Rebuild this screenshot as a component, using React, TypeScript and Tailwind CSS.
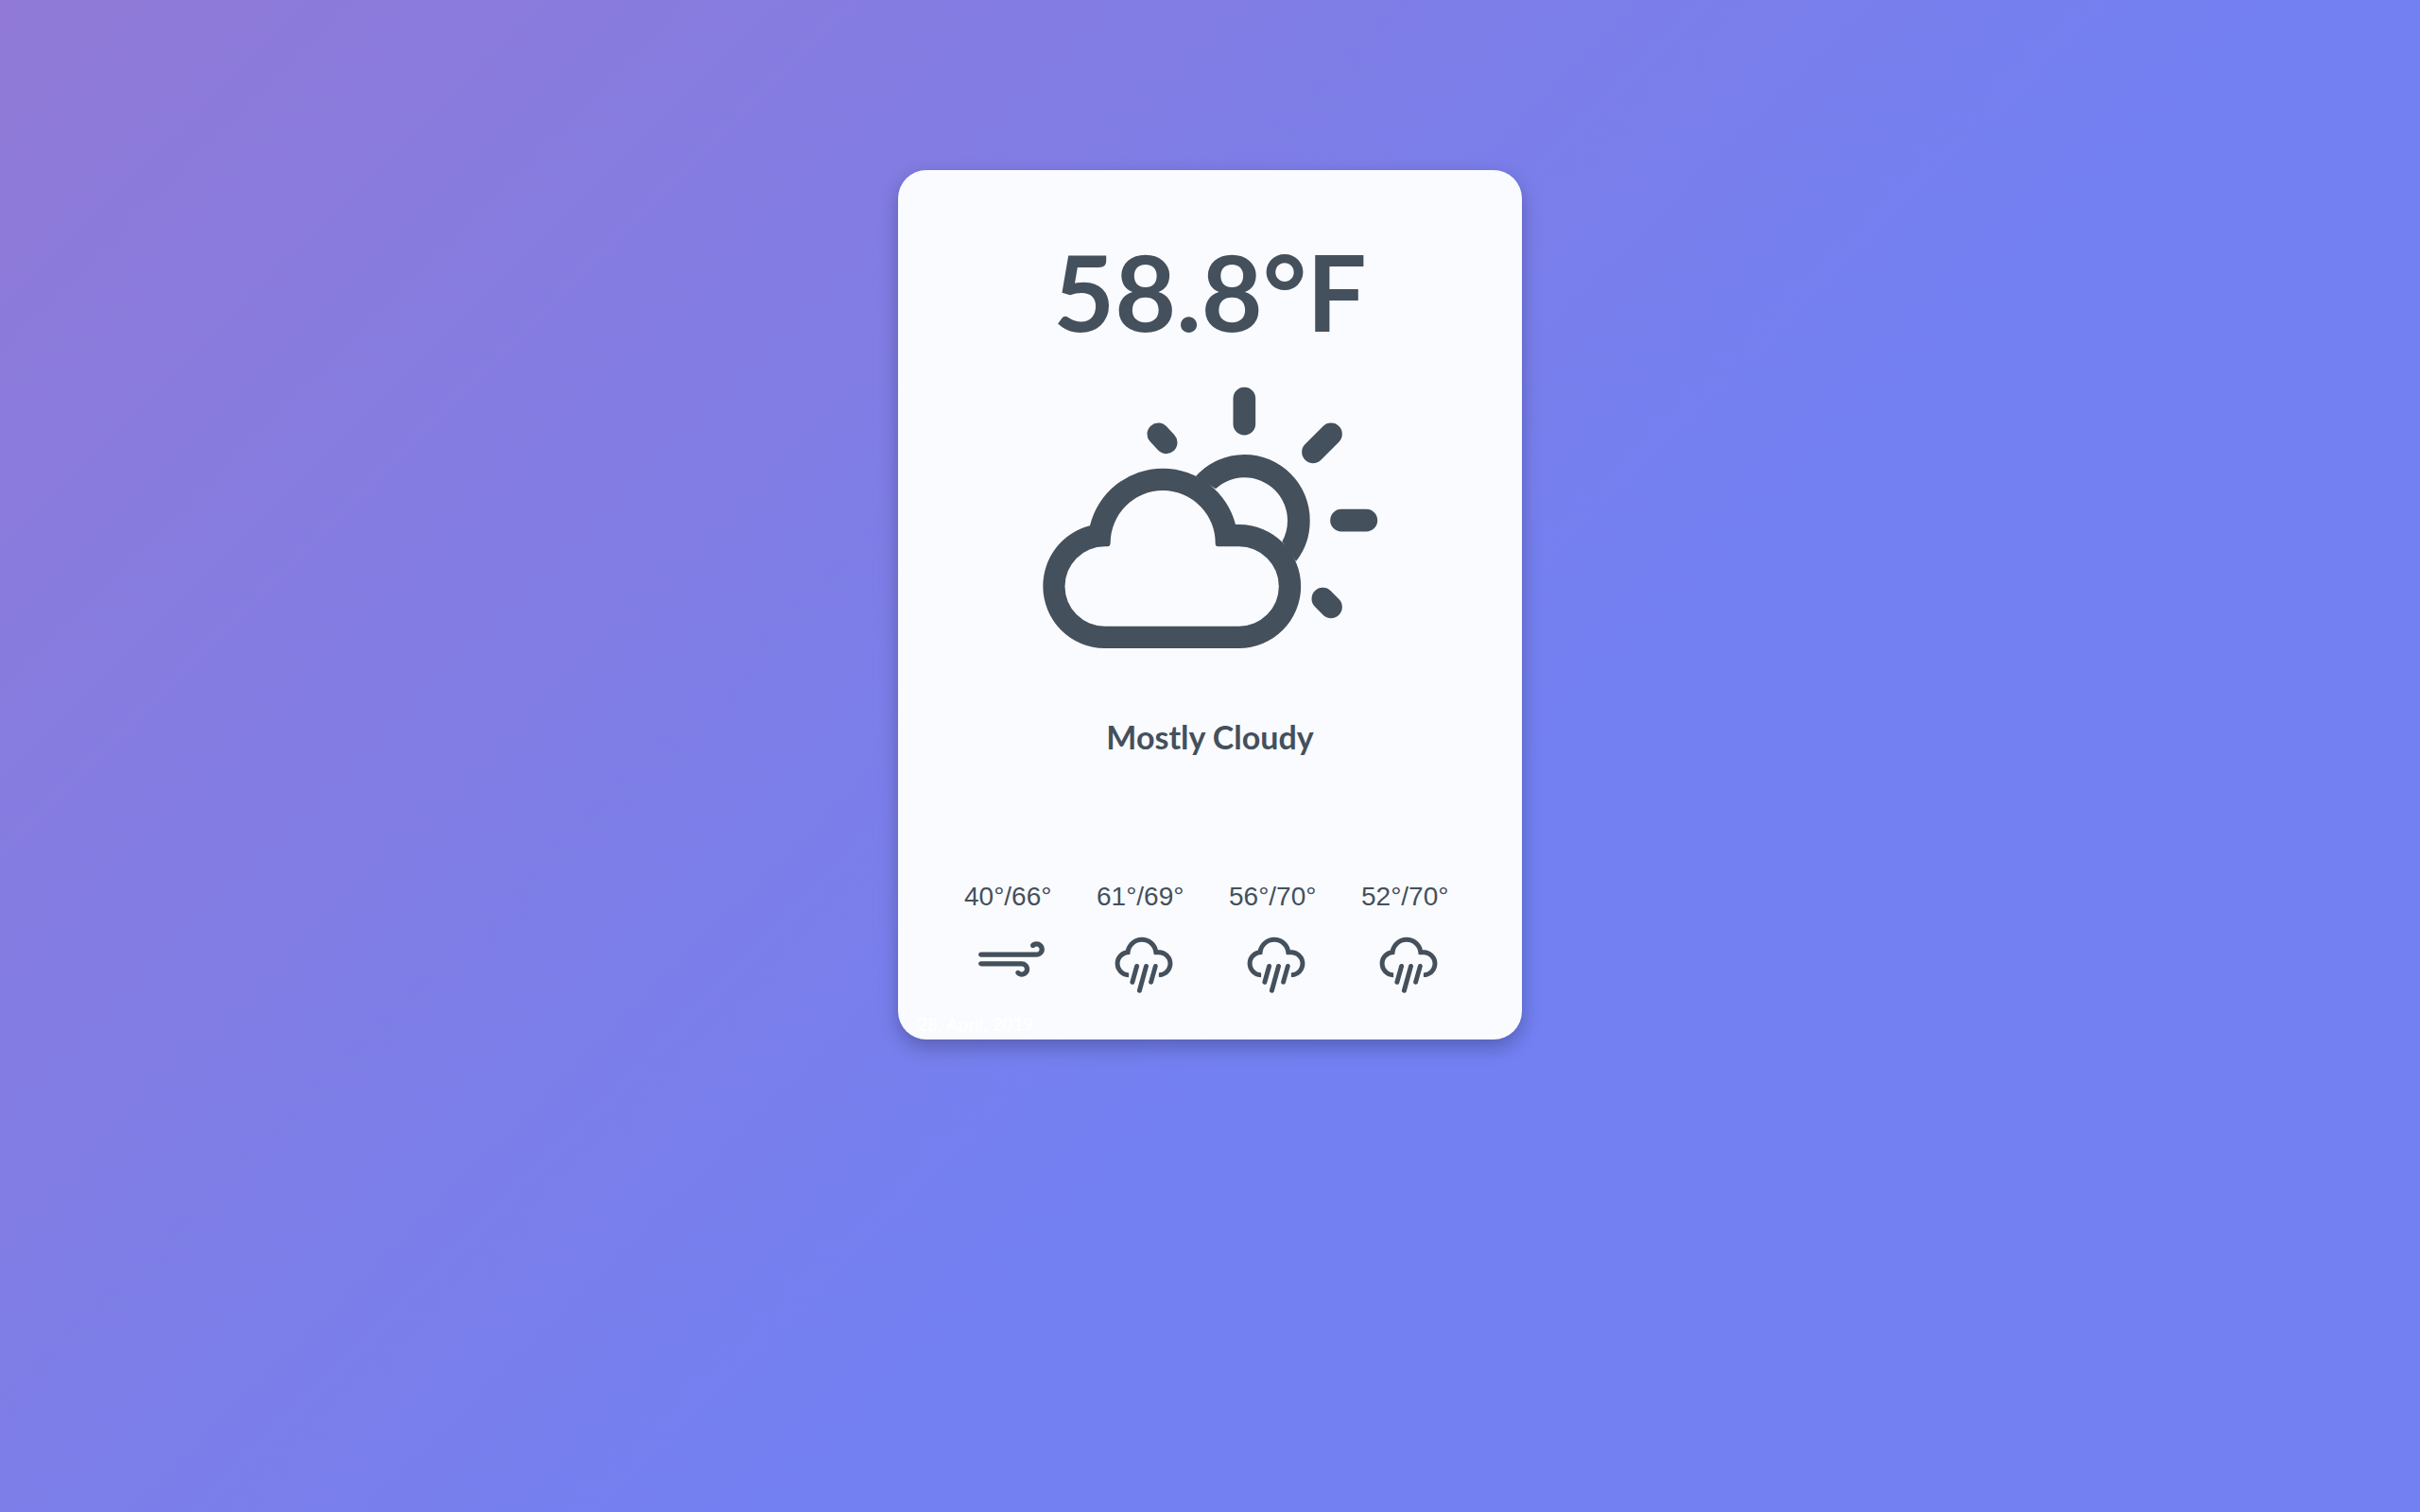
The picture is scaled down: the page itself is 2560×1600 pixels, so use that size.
import { WiRain, WiStrongWind } from "react-icons/wi";

const forecast = [
  { range: "40°/66°", label: "Windy", Icon: WiStrongWind },
  { range: "61°/69°", label: "Rain", Icon: WiRain },
  { range: "56°/70°", label: "Rain", Icon: WiRain },
  { range: "52°/70°", label: "Rain", Icon: WiRain },
];

function CloudySun({ className }: { className?: string }) {
  return (
    <svg viewBox="0 0 1200 960" fill="currentColor" className={className} aria-hidden="true">
      <path
        fillRule="evenodd"
        d="M219 499A238 238 0 0 1 451 317A238 238 0 0 1 681 495L692 495A196.500 196.500 0 0 1 692 888L266 888A197 197 0 0 1 70 691A197 197 0 0 1 219 499ZM284 553A167 167 0 0 1 451 387A167 167 0 0 1 617 558Q618 565 625 565L692 565A126.500 126.500 0 0 1 692 818L266 818A126.500 126.500 0 0 1 266 565L275 565Q284 565 284 553Z"
      />
      <path d="M555 342A208 208 0 0 1 709 273A208 208 0 0 1 917 482A208 208 0 0 1 873 612L829 549A137 137 0 0 0 846 482A137 137 0 0 0 709 346A137 137 0 0 0 618 382Z" />
      <path
        fill="none"
        stroke="currentColor"
        strokeWidth="71"
        strokeLinecap="round"
        d="M709 95V176M1017 482H1096M984 208L927 265M436 208L461 235M958 731L984 757"
      />
    </svg>
  );
}

export default function App() {
  return (
    <div className="min-h-screen bg-[linear-gradient(135deg,#9079d6_0%,#7280f2_60%)] pt-45">
      <main className="relative mx-auto flex w-full max-w-[660px] flex-col items-center rounded-[30px] bg-[#fafbff] px-[70px] pt-19 pb-[42px] font-[Lato,sans-serif] text-[#44505c] shadow-[0_8px_20px_rgba(0,0,0,0.25)]">
        <h1 className="text-[112px] leading-[104px] font-bold">58.8°F</h1>
        <CloudySun className="mt-[30px] h-80 w-[400px]" />
        <p className="mt-[50px] text-[34px] leading-10 font-bold">Mostly Cloudy</p>
        <ul className="flex w-full justify-between pt-[133px] font-['Liberation_Sans',Arial,sans-serif] text-[28px]">
          {forecast.map(({ range, label, Icon }) => (
            <li key={range} className="flex w-[100px] flex-col">
              <span className="leading-8">{range}</span>
              <Icon className="mt-[5px] size-[88px] self-center" role="img" aria-label={label} />
            </li>
          ))}
        </ul>
        <time dateTime="2019-04-28" className="absolute bottom-0.5 left-5 text-[19px] leading-7 font-medium text-white">
          28. April, 2019
        </time>
      </main>
    </div>
  );
}
